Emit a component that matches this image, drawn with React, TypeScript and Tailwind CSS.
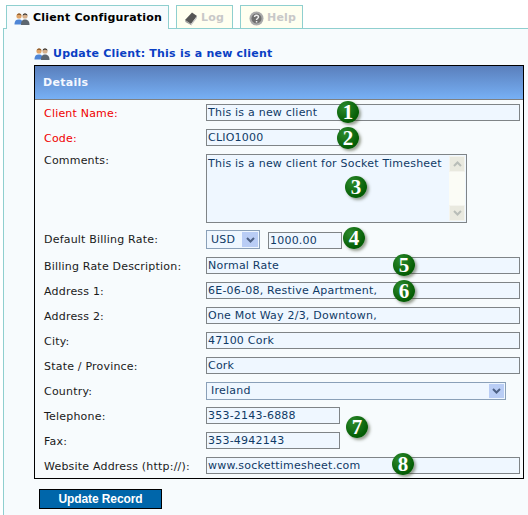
import React from "react";

const VERDANA = "font-['DejaVu_Sans',Verdana,sans-serif]";

function UsersIcon() {
  return (
    <svg width="16" height="14" viewBox="0 0 16 14" className="shrink-0">
      <circle cx="5" cy="4" r="2.6" fill="#e0a468" />
      <path d="M3 3.2C3 1.2 7 .8 7.4 3.4L5 2.8z" fill="#8a5a2b" />
      <path d="M.5 12.5C.5 8.6 2.2 7.4 5 7.4s4 1.4 4 5.1z" fill="#4f86d6" />
      <circle cx="11" cy="4" r="2.6" fill="#d6b08c" />
      <path d="M8.8 3.4C8.8 1 13.2 1 13.4 3.4L11 2.6z" fill="#333" />
      <path d="M7 13c0-4 1.500-5.400 4-5.400s4.500 1.400 4.500 5.400z" fill="#5d6670" />
    </svg>
  );
}

function LogIcon() {
  return (
    <svg width="14" height="15" viewBox="0 0 14 15" className="shrink-0">
      <path d="M1 9L8 1.500l5 3.500-6 8z" fill="#555" />
      <path d="M1 9l6 4 .8 1.500L1.500 11z" fill="#999" />
      <path d="M7 13l6-8v2l-5.500 7z" fill="#c4c4c4" />
    </svg>
  );
}

function HelpIcon() {
  return (
    <svg width="15" height="15" viewBox="0 0 15 15" className="shrink-0">
      <circle cx="7.500" cy="7.500" r="7" fill="#aaa" />
      <circle cx="7.500" cy="7.500" r="5" fill="#6f6f6f" />
      <path d="M5.500 6c0-2.400 4-2.400 4 0 0 1.500-2 1.500-2 3" fill="none" stroke="#eee" strokeWidth="1.500" />
      <rect x="6.800" y="10" width="1.500" height="1.500" fill="#eee" />
    </svg>
  );
}

function Tab({ label, icon, active, className }: { label: string; icon: React.ReactNode; active?: boolean; className: string }) {
  return (
    <div
      className={`flex items-center border border-b-0 border-[#8fcfcf] pt-[2px] font-bold text-[11px] whitespace-nowrap tracking-[0.2px] ${className} ${
        active ? "bg-[#f7fbfd] text-black relative z-10 -mb-px h-[24px]" : "bg-[#fffff0] text-[#c8c8c8] h-[23px]"
      }`}
    >
      {icon}
      <span className="ml-[3px]">{label}</span>
    </div>
  );
}

function Field({ value, w }: { value: string; w: string }) {
  return (
    <div className={`h-[17px] border border-[#7f8487] bg-[#eff7ff] text-[#0f3a66] text-[11px] leading-[16px] pl-[1px] whitespace-pre tracking-[0.22px] ${w}`}>
      {value}
    </div>
  );
}

function Row({ label, required, children, h = "h-[25px]", labelClass = "pt-px" }: { label: string; required?: boolean; children: React.ReactNode; h?: string; labelClass?: string }) {
  return (
    <div className={`flex ${h}`}>
      <div className={`w-[171px] pl-[9px] text-[11px] leading-[17px] tracking-[0.2px] whitespace-nowrap ${labelClass} ${required ? "text-[#f00000]" : "text-[#1a1a1a]"}`}>
        {label}
      </div>
      <div className="flex-1">{children}</div>
    </div>
  );
}

function Badge({ n, className }: { n: number; className: string }) {
  return (
    <div
      className={`absolute w-[22px] h-[22px] rounded-full bg-[radial-gradient(circle_at_35%_30%,#2c8a2c,#045c04_70%)] shadow-[2px_2px_3px_rgba(60,70,40,0.5)] text-white text-[21px] leading-[22px] font-bold text-center font-['Liberation_Serif',serif] ${className}`}
    >
      {n}
    </div>
  );
}

export default function App() {
  return (
    <div className={`relative w-[528px] h-[515px] overflow-hidden bg-white ${VERDANA}`}>
      {/* Tabs */}
      <div className="flex items-end h-[28px] pl-[6px]">
        <Tab label="Client Configuration" icon={<UsersIcon />} active className="w-[163px] pl-[7px]" />
        <Tab label="Log" icon={<LogIcon />} className="w-[57px] ml-[7px] pl-[7px]" />
        <Tab label="Help" icon={<HelpIcon />} className="w-[63px] ml-[7px] pl-[8px]" />
      </div>

      {/* Panel */}
      <div className="ml-[3px] h-[487px] border-l border-t border-[#8fcfcf] bg-[#f7fbfd] pl-[30px] pr-[4px]">
        <div className="flex items-center h-[36px] pt-[14px] text-[11px] font-bold text-[#0a3fc4]">
          <UsersIcon />
          <span className="ml-[3px] tracking-[0.22px]">Update Client: This is a new client</span>
        </div>

        <div className="relative border border-black w-[490px] h-[414px]">
          <div className="h-[34px] pl-[8px] pt-[2px] flex items-center border-b border-[#808080] bg-gradient-to-b from-[#5a7fbc] to-[#77b0f5] text-[#f4f8ff] text-[11px] font-bold tracking-[0.3px]">
            Details
          </div>

          <div className="pt-[4px]">
            <Row label="Client Name:" required>
              <Field value="This is a new client" w="w-[314px]" />
            </Row>
            <Row label="Code:" required>
              <Field value="CLIO1000" w="w-[134px]" />
            </Row>
            <Row label="Comments:" h="h-[76px]" labelClass="-mt-[2px]">
              <div className="flex w-[261px] h-[69px] border border-[#7f8487] bg-[#eff7ff]">
                <div className="flex-1 text-[#0f3a66] text-[11px] leading-[15px] pl-[1px] pt-[1px] tracking-[0.22px] whitespace-nowrap">
                  This is a new client for Socket Timesheet
                </div>
                <div className="w-[16px] my-[1px] mr-px flex flex-col justify-between bg-[#fbfcf6]">
                  <div className="h-[16px] flex items-center justify-center bg-[#e9e9df] border border-[#f4f4ee]">
                    <svg width="9" height="6" viewBox="0 0 9 6"><path d="M1 5l3.500-3.500L8 5" fill="none" stroke="#b8bdb8" strokeWidth="2" /></svg>
                  </div>
                  <div className="h-[16px] flex items-center justify-center bg-[#e9e9df] border border-[#f4f4ee]">
                    <svg width="9" height="6" viewBox="0 0 9 6"><path d="M1 1l3.500 3.500L8 1" fill="none" stroke="#b8bdb8" strokeWidth="2" /></svg>
                  </div>
                </div>
              </div>
            </Row>
            <Row label="Default Billing Rate:" h="h-[27px]">
              <div className="flex items-start">
                <div className="flex items-center justify-between w-[54px] h-[19px] border border-[#8aa0b8] bg-[#eff7ff] pl-[4px] pr-px text-[#0f3a66] text-[11px] tracking-[0.22px]">
                  <span className="pt-px">USD</span>
                  <span className="flex items-center justify-center w-[16px] h-[15px] bg-[#b9cdf5]">
                    <svg width="9" height="6" viewBox="0 0 9 6"><path d="M1 1l3.500 3.500L8 1" fill="none" stroke="#4d6185" strokeWidth="2" /></svg>
                  </span>
                </div>
                <div className="ml-[8px] mt-[2px]">
                  <Field value="1000.00" w="w-[74px]" />
                </div>
              </div>
            </Row>
            <Row label="Billing Rate Description:">
              <Field value="Normal Rate" w="w-[314px]" />
            </Row>
            <Row label="Address 1:">
              <Field value="6E-06-08, Restive Apartment," w="w-[314px]" />
            </Row>
            <Row label="Address 2:">
              <Field value="One Mot Way 2/3, Downtown," w="w-[314px]" />
            </Row>
            <Row label="City:">
              <Field value="47100 Cork" w="w-[314px]" />
            </Row>
            <Row label="State / Province:">
              <Field value="Cork" w="w-[314px]" />
            </Row>
            <Row label="Country:">
              <div className="flex items-center justify-between w-[300px] h-[18px] border border-[#8aa0b8] bg-[#eff7ff] pl-[4px] pr-px text-[#0f3a66] text-[11px] tracking-[0.22px]">
                <span className="pt-px">Ireland</span>
                <span className="flex items-center justify-center w-[15px] h-[14px] bg-[#b9cdf5]">
                  <svg width="9" height="6" viewBox="0 0 9 6"><path d="M1 1l3.500 3.500L8 1" fill="none" stroke="#4d6185" strokeWidth="2" /></svg>
                </span>
              </div>
            </Row>
            <Row label="Telephone:">
              <Field value="353-2143-6888" w="w-[134px]" />
            </Row>
            <Row label="Fax:">
              <Field value="353-4942143" w="w-[134px]" />
            </Row>
            <Row label="Website Address (http://):" h="h-[21px]">
              <Field value="www.sockettimesheet.com" w="w-[314px]" />
            </Row>
          </div>

          {/* Numbered callouts */}
          <Badge n={1} className="left-[302px] top-[35px]" />
          <Badge n={2} className="left-[302px] top-[61px]" />
          <Badge n={3} className="left-[310px] top-[110px]" />
          <Badge n={4} className="left-[308px] top-[161px]" />
          <Badge n={5} className="left-[358px] top-[188px]" />
          <Badge n={6} className="left-[358px] top-[214px]" />
          <Badge n={7} className="left-[311px] top-[350px]" />
          <Badge n={8} className="left-[357px] top-[387px]" />
        </div>

        <button className="mt-[10px] ml-[5px] block w-[123px] h-[20px] border border-black bg-[#0066aa] text-white text-[12px] tracking-[-0.1px] font-bold font-['Liberation_Sans',Arial,sans-serif]">
          Update Record
        </button>
      </div>
    </div>
  );
}
